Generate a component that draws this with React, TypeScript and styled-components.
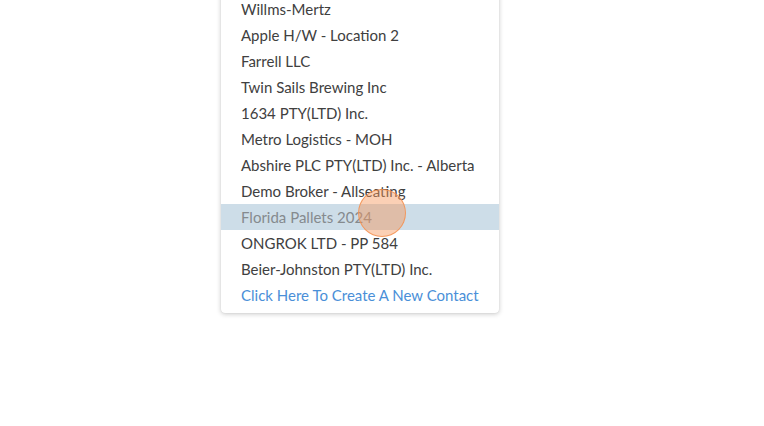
import styled, { createGlobalStyle } from "styled-components";

const GlobalStyle = createGlobalStyle`
    html, body {
        margin: 0;
        padding: 0;
        background: #ffffff;
    }
    body {
        font-family: "Lato", "DejaVu Sans", sans-serif;
    }
`

const Page = styled.div`
    position: relative;
    width: 764px;
    height: 426px;
    overflow: hidden;
    background: #ffffff;
`

const Menu = styled.ul`
    position: absolute;
    top: -10px;
    left: 221px;
    width: 278px;
    margin: 0;
    padding: 6px 0 5px;
    list-style: none;
    background: #ffffff;
    border-radius: 0 0 4px 4px;
    box-shadow: 0 1px 5px rgba(0, 0, 0, 0.22), 0 0 1px rgba(0, 0, 0, 0.15);
`

const Item = styled.li<{ active?: boolean; link?: boolean }>`
    height: 26px;
    display: flex;
    align-items: center;
    padding: 0 20px;
    font-size: 15px;
    white-space: nowrap;
    color: ${props => props.link ? "#4a8fd8" : props.active ? "#858a8e" : "#404040"};
    background: ${props => props.active ? "#cddde8" : "transparent"};
`

const Cursor = styled.div`
    position: absolute;
    left: 358px;
    top: 189px;
    width: 46px;
    height: 46px;
    border-radius: 50%;
    background: rgba(247, 150, 90, 0.45);
    border: 1.5px solid rgba(245, 145, 80, 0.85);
`

const contacts = [
    "Willms-Mertz",
    "Apple H/W - Location 2",
    "Farrell LLC",
    "Twin Sails Brewing Inc",
    "1634 PTY(LTD) Inc.",
    "Metro Logistics - MOH",
    "Abshire PLC PTY(LTD) Inc. - Alberta",
    "Demo Broker - Allseating",
    "Florida Pallets 2024",
    "ONGROK LTD - PP 584",
    "Beier-Johnston PTY(LTD) Inc.",
]

export default function App() {
    return (
        <Page>
            <GlobalStyle />
            <Menu>
                {contacts.map(name => (
                    <Item key={name} active={name === "Florida Pallets 2024"}>{name}</Item>
                ))}
                <Item link>Click Here To Create A New Contact</Item>
            </Menu>
            <Cursor />
        </Page>
    )
}
